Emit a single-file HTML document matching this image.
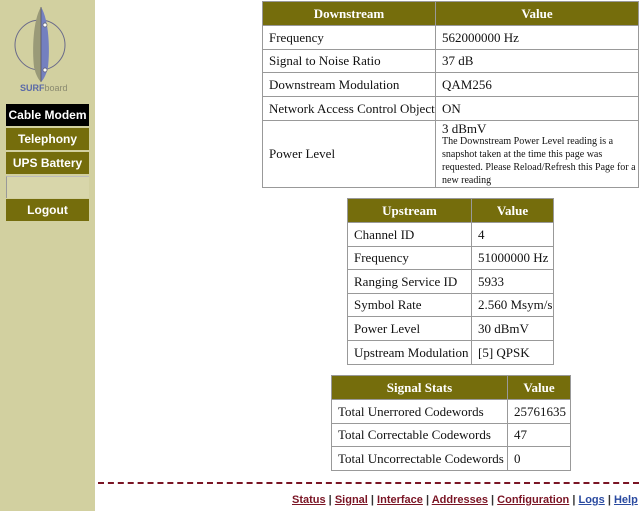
<!DOCTYPE html>
<html><head><style>
body{margin:0;width:639px;height:511px;background:#fff;position:relative;overflow:hidden;font-family:"Liberation Serif","DejaVu Serif",serif;}
#side{position:absolute;left:0;top:0;width:95px;height:511px;background:#d2d0a0;}
.btn{position:absolute;left:6px;width:83px;height:22px;background:#756d0c;color:#fff;font:bold 12px "Liberation Sans",sans-serif;text-align:center;line-height:22px;}
table{position:absolute;border-collapse:collapse;border:1px solid #888;font-size:13px;color:#111;table-layout:fixed;}
td,th{border:1px solid #999;padding:0 0 0 6px;text-align:left;white-space:nowrap;overflow:hidden;}
th{background:#756d0c;color:#fff;text-align:center;padding:0;font-weight:bold;}
#dash{position:absolute;left:98px;top:482px;width:541px;border-top:2px dashed #7a1424;}
#links{position:absolute;left:292px;top:494px;font:bold 11px "Liberation Sans",sans-serif;color:#333;}
#links a{color:#7a1424;text-decoration:underline;}
#links a.b{color:#2a4aa0;}
</style></head><body>
<div id="side">
<svg width="95" height="100" style="position:absolute;left:0;top:0">
<circle cx="40" cy="45" r="25" fill="none" stroke="#6a6a8a" stroke-width="1"/>
<path d="M41 7 C33 20 32 50 34 67 C36 76 39 80 41 82 Z" fill="#9a9a78"/>
<path d="M41 7 C49 20 50 50 48 67 C46 76 43 80 41 82 Z" fill="#7480c0"/>
<line x1="41" y1="7" x2="41" y2="82" stroke="#556" stroke-width="0.8"/>
<circle cx="45" cy="25" r="2" fill="#fff" stroke="#556" stroke-width="0.7"/>
<circle cx="45" cy="70" r="2" fill="#fff" stroke="#556" stroke-width="0.7"/>
<text x="20" y="91" font-family="Liberation Sans,sans-serif" font-size="9" font-weight="bold" fill="#5a6aa8">SURF<tspan fill="#8a8a70" font-weight="normal">board</tspan></text>
</svg>
<div class="btn" style="top:104px;background:#000;">Cable Modem</div>
<div class="btn" style="top:128px;">Telephony</div>
<div class="btn" style="top:152px;">UPS Battery</div>
<div style="position:absolute;left:6px;top:176px;width:82px;height:21px;border-left:1px solid #999;border-top:1px solid #bbb;background:#d8d6aa;"></div>
<div class="btn" style="top:199px;">Logout</div>
</div>

<table style="left:262px;top:1px;width:377px;">
<col style="width:173px"><col>
<tr style="height:24px"><th>Downstream</th><th>Value</th></tr>
<tr style="height:24px"><td>Frequency</td><td>562000000 Hz</td></tr>
<tr style="height:23px"><td>Signal to Noise Ratio</td><td>37 dB</td></tr>
<tr style="height:24px"><td>Downstream Modulation</td><td>QAM256</td></tr>
<tr style="height:24px"><td>Network Access Control Object</td><td>ON</td></tr>
<tr style="height:67px"><td>Power Level</td><td style="line-height:11px;white-space:normal">3 dBmV<br><span style="font-size:10px">The Downstream Power Level reading is a snapshot taken at the time this page was requested. Please Reload/Refresh this Page for a new reading</span></td></tr>
</table>

<table style="left:347px;top:198px;width:207px;">
<col style="width:124px"><col>
<tr style="height:24px"><th>Upstream</th><th>Value</th></tr>
<tr style="height:24px"><td>Channel ID</td><td>4</td></tr>
<tr style="height:23px"><td>Frequency</td><td>51000000 Hz</td></tr>
<tr style="height:24px"><td>Ranging Service ID</td><td>5933</td></tr>
<tr style="height:23px"><td>Symbol Rate</td><td>2.560 Msym/s</td></tr>
<tr style="height:24px"><td>Power Level</td><td>30 dBmV</td></tr>
<tr style="height:24px"><td>Upstream Modulation</td><td>[5] QPSK</td></tr>
</table>

<table style="left:331px;top:375px;width:240px;">
<col style="width:176px"><col>
<tr style="height:24px"><th>Signal Stats</th><th>Value</th></tr>
<tr style="height:24px"><td>Total Unerrored Codewords</td><td>25761635</td></tr>
<tr style="height:23px"><td>Total Correctable Codewords</td><td>47</td></tr>
<tr style="height:24px"><td>Total Uncorrectable Codewords</td><td>0</td></tr>
</table>

<div id="dash"></div>
<div id="links"><a>Status</a> | <a>Signal</a> | <a>Interface</a> | <a>Addresses</a> | <a>Configuration</a> | <a class="b">Logs</a> | <a class="b">Help</a></div>
</body></html>
